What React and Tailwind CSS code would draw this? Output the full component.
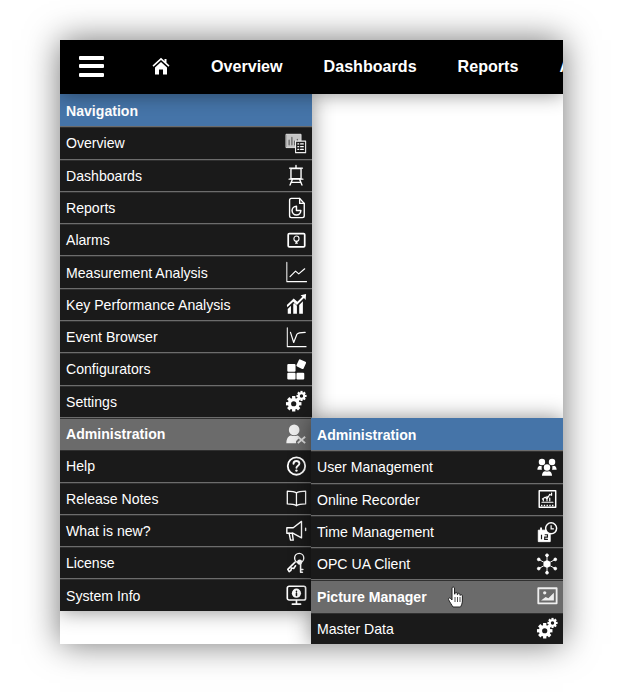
import React from "react";

const S = ({ children, w = 24, h = 24, vb = "0 0 24 24" }) => (
  <svg width={w} height={h} viewBox={vb} fill="none" stroke="white" strokeWidth="1.5" strokeLinecap="round" strokeLinejoin="round">{children}</svg>
);
const Gear = ({ cx, cy, r }) => {
  const teeth = [];
  for (let i = 0; i < 8; i++) teeth.push(<rect key={i} x={cx - r * 0.28} y={cy - r * 1.32} width={r * 0.56} height={r * 0.6} fill="white" stroke="none" transform={`rotate(${i * 45} ${cx} ${cy})`} />);
  return <g>{teeth}<circle cx={cx} cy={cy} r={r * 0.72} fill="none" stroke="white" strokeWidth={r * 0.55} /></g>;
};
const Gears = () => (
  <S><Gear cx="9.5" cy="15" r="6.4" /><Gear cx="18" cy="6.5" r="4.2" /></S>
);
const icons = {
  overview: (
    <S>
      <rect x="1.5" y="2.500" width="16" height="14.500" fill="#c4c4c4" stroke="#e4e4e4" strokeWidth="1" />
      <path d="M4.500 14V9M7.500 14V6M10.500 14v-4M13.500 14V8" stroke="#666" strokeWidth="1.400" />
      <rect x="11.500" y="10" width="11" height="12.500" fill="#1a1a1a" stroke="#eee" strokeWidth="1.200" />
      <path d="M14 13h1M17 13h3M14 16h1M17 16h3M14 19h1M17 19h3" strokeWidth="1.200" />
    </S>
  ),
  board: (
    <S>
      <path d="M12 1.500v3M5 4.500h14" />
      <rect x="6.500" y="5" width="11" height="11" />
      <path d="M4.500 16.500h15M8 17l-2.500 6M16 17l2.500 6M6.500 20h11" />
    </S>
  ),
  report: (
    <S>
      <path d="M7 1.500h9l5 5.500v13.500a2 2 0 0 1-2 2H7a2 2 0 0 1-2-2V3.500a2 2 0 0 1 2-2z" />
      <path d="M16 1.500V7h5" />
      <path d="M12.500 10a4.800 4.800 0 1 0 4.800 4.800h-4.800z" strokeWidth="1.600" />
    </S>
  ),
  alarm: (
    <S>
      <rect x="3.500" y="5" width="18" height="14.500" rx="1.200" strokeWidth="1.900" />
      <circle cx="12.500" cy="10.500" r="2.800" strokeWidth="1.200" />
      <path d="M11.500 15.500h2M12 13.500v1.500M13 13.500v1.500" strokeWidth="1.100" />
    </S>
  ),
  line: (
    <S>
      <path d="M2 1.500V22.500H23.500" strokeWidth="1.100" />
      <path d="M5.500 17l6-6 3.500 3 6.500-5.500" strokeWidth="1.300" />
    </S>
  ),
  kpi: (
    <svg width="24" height="24" viewBox="0 0 24 24" fill="white">
      <path d="M3 22.500v-5l3.500-3.500v8.500zM9 22.500V12l1-1 3 3v8.500zM15.500 22.500v-9.500l4-4v13.500z" />
      <path d="M2 13l7.500-7 4 3.500 5.500-5.500-2-1.500 6-1.500-.5 6.500-1.800-2-7.700 7.500-4-3.500-6.500 6z" />
    </svg>
  ),
  event: (
    <S>
      <path d="M2.500 2V22.500H23" strokeWidth="1.100" />
      <path d="M6 7l3.500 11L13 9c1-1.500 4-2 9-2" strokeWidth="1.300" />
    </S>
  ),
  config: (
    <svg width="24" height="24" viewBox="0 0 24 24" fill="white">
      <rect x="2.500" y="6.500" width="9" height="8.500" rx="1.200" />
      <rect x="2.500" y="16" width="9" height="7.500" rx="1.200" />
      <rect x="12.500" y="16" width="8.500" height="7.500" rx="1.200" />
      <rect x="13.500" y="2.500" width="8.500" height="8.500" rx="1.200" transform="rotate(25 17.700 6.700)" />
    </svg>
  ),
  admin: (
    <svg width="24" height="24" viewBox="0 0 24 24" fill="#eee">
      <circle cx="10" cy="7.500" r="5.800" />
      <path d="M1.500 22c0-5 2-8 5-8.500 2 1 5 1 7 0 1 .2 2 1 2.500 2L12 20v2z" />
      <path d="M14 15l8 7M22 15l-8 7" stroke="#ddd" strokeWidth="2" />
    </svg>
  ),
  help: (
    <S>
      <circle cx="12.500" cy="12" r="9.500" strokeWidth="2" />
      <path d="M9.300 9.500c0-2 1.400-3 3.200-3s3.200 1 3.200 2.800c0 2.400-3.200 2.400-3.200 4.700" strokeWidth="2.100" />
      <circle cx="12.500" cy="17" r="1.300" fill="white" stroke="none" />
    </S>
  ),
  book: (
    <S>
      <path d="M12.500 6.500C10.500 5 7 4.500 2.500 4.500v14c4.500 0 8 .5 10 2 2-1.500 5.500-2 10-2v-14c-4.500 0-8 .5-10 2zM12.500 6.500v14" strokeWidth="1.400" />
    </S>
  ),
  horn: (
    <S>
      <path d="M2 8.500h7L18 1.500v18L9 14.500H2z" strokeWidth="1.500" />
      <path d="M4.500 14.500l1.500 7.500h3l-1-7.500M22.500 9v2.500" strokeWidth="1.500" />
    </S>
  ),
  keys: (
    <S>
      <circle cx="15.500" cy="6.500" r="5" strokeWidth="1.500" />
      <path d="M11 11l-8 8 1.500 2.500 2-1.500.5-2.500 2.500.5 2-3" strokeWidth="1.700" />
      <circle cx="16" cy="11" r="2.800" fill="white" stroke="none" />
      <path d="M17 13v9M17 19h2.500M17 22h2" strokeWidth="1.700" />
    </S>
  ),
  info: (
    <S>
      <rect x="2.500" y="2.500" width="20" height="15" rx="2" strokeWidth="1.800" />
      <circle cx="12.500" cy="10" r="5" fill="white" stroke="none" />
      <path d="M12.500 8v.3M12.500 10v2.500" stroke="#1a1a1a" strokeWidth="1.700" />
      <path d="M12.500 18v3M8 22h9" strokeWidth="1.800" />
    </S>
  ),
  users: (
    <svg width="24" height="24" viewBox="0 0 24 24" fill="white">
      <circle cx="6.500" cy="6.500" r="3.500" /><circle cx="17.500" cy="6.500" r="3.500" /><circle cx="12" cy="12.500" r="3.500" />
      <path d="M1.500 15c0-3 1.500-4.500 3-4.500l2 1c-.5 1-.5 2 0 3.500h-4zM22.500 15c0-3-1.500-4.500-3-4.500l-2 1c.5 1 .5 2 0 3.500h4z" />
      <path d="M6.500 21.500c0-3 1.500-5 3.500-5 1.300.6 2.700.6 4 0 2 0 3.500 2 3.500 5z" />
    </svg>
  ),
  recorder: (
    <S>
      <rect x="3.500" y="3" width="18" height="18" strokeWidth="1.600" />
      <path d="M7 12l3-2 2 2 3-5 2 1V5.500M8 14v-2M12 14V9M15 14v-3" strokeWidth="1.300" />
      <path d="M6.500 15.500h12" strokeWidth="1.200" />
      <path d="M5.500 19h14" strokeWidth="1.600" strokeDasharray="1.500 1.500" strokeLinecap="butt" />
    </S>
  ),
  time: (
    <svg width="24" height="24" viewBox="0 0 24 24" fill="none" stroke="white">
      <path d="M2.500 10h13v12.500h-13z" fill="white" />
      <path d="M5.500 7v4M11 7v4" strokeWidth="2" />
      <path d="M6 15v5M9.500 15h3v2.500h-3V20h3.500" stroke="#1a1a1a" strokeWidth="1.300" />
      <circle cx="16.500" cy="8" r="6" fill="#1a1a1a" strokeWidth="1.600" />
      <path d="M16.500 4.500v4h3" strokeWidth="1.300" />
    </svg>
  ),
  opc: (
    <svg width="24" height="24" viewBox="0 0 24 24" fill="white" stroke="white" strokeWidth="1">
      <path d="M12 2v20M3 7l18 10M21 7L3 17" />
      <circle cx="12" cy="12" r="3.500" />
      <circle cx="12" cy="2.500" r="1.500" /><circle cx="12" cy="21.500" r="1.500" />
      <circle cx="3" cy="7" r="1.500" /><circle cx="21" cy="7" r="1.500" />
      <circle cx="3" cy="17" r="1.500" /><circle cx="21" cy="17" r="1.500" />
    </svg>
  ),
  picture: (
    <S>
      <rect x="2.500" y="3.500" width="20" height="16.500" strokeWidth="2" stroke="#eee" />
      <path d="M5.500 17l5-4 3 1.500 6-6v8.500z" fill="#eee" stroke="none" />
      <circle cx="9.500" cy="8.500" r="1.800" fill="#eee" stroke="none" />
    </S>
  ),
};

const Row = ({ label, icon, active }) => (
  <div className={`flex h-[32.3px] items-center justify-between border-t border-[#6c6c6c] pl-[6px] pr-[4px] shadow-[inset_0_1px_0_#303030] ${active ? "bg-[#6b6b6b] font-bold" : "bg-[#1a1a1a]"}`}>
    <span className="pt-px text-[14.1px] leading-none text-white">{label}</span>
    <span className="flex h-6 w-6 items-center justify-center [&>svg]:h-[22px] [&>svg]:w-[22px]">{icon}</span>
  </div>
);
const Head = ({ label }) => (
  <div className="flex h-[32.3px] items-center bg-[#4574a8] pl-[6px] pt-px text-[14.1px] font-bold leading-none text-white">{label}</div>
);

const left = [
  ["Overview", icons.overview], ["Dashboards", icons.board], ["Reports", icons.report], ["Alarms", icons.alarm],
  ["Measurement Analysis", icons.line], ["Key Performance Analysis", icons.kpi], ["Event Browser", icons.event],
  ["Configurators", icons.config], ["Settings", <Gears />], ["Administration", icons.admin, true], ["Help", icons.help],
  ["Release Notes", icons.book], ["What is new?", icons.horn], ["License", icons.keys], ["System Info", icons.info],
];
const right = [
  ["User Management", icons.users], ["Online Recorder", icons.recorder], ["Time Management", icons.time],
  ["OPC UA Client", icons.opc], ["Picture Manager", icons.picture, true], ["Master Data", <Gears />],
];

export default function App() {
  return (
    <div className="h-[698px] w-[625px] bg-white pl-[60px] pt-[40px] font-['Liberation_Sans',Arial,sans-serif]">
      <div className="relative h-[604px] w-[503px] overflow-hidden bg-white shadow-[0_0_32px_rgba(0,0,0,0.55)]">
        <div className="relative z-20 flex h-[54px] items-center whitespace-nowrap bg-black pb-[2px] text-[16.1px] font-bold text-white shadow-[0_0_20px_rgba(0,0,0,0.45)]">
          <div className="ml-[19px] flex w-[25px] shrink-0 flex-col gap-[4.5px]">
            <span className="h-[4px] rounded-[1px] bg-white" />
            <span className="h-[4px] rounded-[1px] bg-white" />
            <span className="h-[4px] rounded-[1px] bg-white" />
          </div>
          <svg className="ml-[48px] shrink-0" width="18" height="18" viewBox="0 0 18 18" fill="white">
            <path d="M9 .8L.5 8.500l1 1.200L9 3l7.500 6.700 1-1.200-3-2.700V2h-2v2.100z" />
            <path d="M3 10.500L9 5l6 5.500V17.500h-4v-5H7v5H3z" />
          </svg>
          <span className="ml-[41px] shrink-0">Overview</span>
          <span className="ml-[41px] shrink-0">Dashboards</span>
          <span className="ml-[41px] shrink-0">Reports</span>
          <span className="ml-[41px] shrink-0">Alarms</span>
        </div>
        <div className="flex">
          <div className="relative z-0 h-[518px] w-[252px]">
            <div className="shadow-[0_0_20px_rgba(0,0,0,0.45)]">
              <Head label="Navigation" />
              {left.map(([l, i, a]) => <Row key={l} label={l} icon={i} active={a} />)}
            </div>
          </div>
          <div className="relative z-10 -ml-px mt-[324px] w-[252px] shadow-[0_0_20px_rgba(0,0,0,0.45)]">
            <Head label="Administration" />
            {right.map(([l, i, a]) => <Row key={l} label={l} icon={i} active={a} />)}
          </div>
        </div>
        <svg className="absolute left-[387px] top-[546px] z-20" width="18" height="22" viewBox="0 0 18 22" fill="white" stroke="#222" strokeWidth="1">
          <path d="M5 2c0-1.300 2.500-1.300 2.500 0v6l.5.200V7c0-1 2-1 2.200 0v1.500l.5.100V8c0-1 2-1 2.200.2v1l.5.100c.2-.8 2-.8 2 .5V15c0 2.500-1.500 5.500-2 6H6c-.8-1.500-4-6-4.500-7.500-.5-1.300 1-2.200 2-1L5 14z" />
          <path d="M8 11v5M10.500 11v5M13 11v5" strokeWidth=".8" />
        </svg>
      </div>
    </div>
  );
}
